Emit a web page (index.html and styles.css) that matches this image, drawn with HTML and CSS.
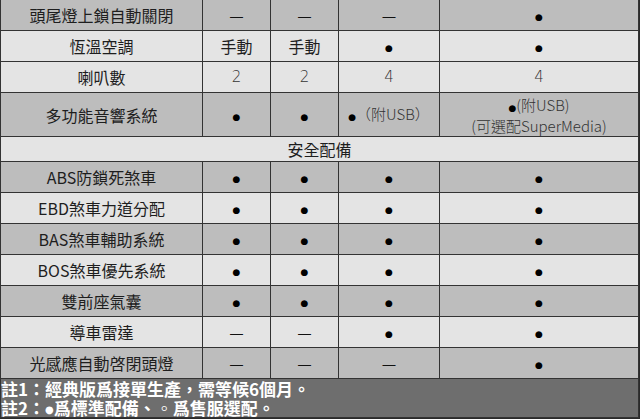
FILE: index.html
```html
<!DOCTYPE html>
<html lang="zh-Hant">
<head>
<meta charset="utf-8">
<link rel="stylesheet" href="styles.css">
</head>
<body>
<table class="spec">
<colgroup>
<col class="c1"><col class="c2"><col class="c3"><col class="c4"><col class="c5">
</colgroup>
<tbody>
<tr class="dark r"><td>頭尾燈上鎖自動關閉</td><td><span class="dash">—</span></td><td><span class="dash">—</span></td><td><span class="dash">—</span></td><td><span class="dot">●</span></td></tr>
<tr class="light r"><td>恆溫空調</td><td>手動</td><td>手動</td><td><span class="dot">●</span></td><td><span class="dot">●</span></td></tr>
<tr class="light r"><td>喇叭數</td><td class="num">2</td><td class="num">2</td><td class="num">4</td><td class="num">4</td></tr>
<tr class="dark tall"><td>多功能音響系統</td><td><span class="dot">●</span></td><td><span class="dot">●</span></td><td><span class="dot">●</span><span class="lat">（附USB）</span></td><td class="two"><span class="dot">●</span><span class="lat">(附USB)</span><br><span class="lat">(可選配SuperMedia)</span></td></tr>
<tr class="light sec"><td colspan="5">安全配備</td></tr>
<tr class="dark r"><td>ABS防鎖死煞車</td><td><span class="dot">●</span></td><td><span class="dot">●</span></td><td><span class="dot">●</span></td><td><span class="dot">●</span></td></tr>
<tr class="light r"><td>EBD煞車力道分配</td><td><span class="dot">●</span></td><td><span class="dot">●</span></td><td><span class="dot">●</span></td><td><span class="dot">●</span></td></tr>
<tr class="dark r"><td>BAS煞車輔助系統</td><td><span class="dot">●</span></td><td><span class="dot">●</span></td><td><span class="dot">●</span></td><td><span class="dot">●</span></td></tr>
<tr class="light r"><td>BOS煞車優先系統</td><td><span class="dot">●</span></td><td><span class="dot">●</span></td><td><span class="dot">●</span></td><td><span class="dot">●</span></td></tr>
<tr class="dark r"><td>雙前座氣囊</td><td><span class="dot">●</span></td><td><span class="dot">●</span></td><td><span class="dot">●</span></td><td><span class="dot">●</span></td></tr>
<tr class="light r"><td>導車雷達</td><td><span class="dash">—</span></td><td><span class="dash">—</span></td><td><span class="dot">●</span></td><td><span class="dot">●</span></td></tr>
<tr class="dark r"><td>光感應自動啓閉頭燈</td><td><span class="dash">—</span></td><td><span class="dash">—</span></td><td><span class="dash">—</span></td><td><span class="dot">●</span></td></tr>
<tr class="foot"><td colspan="5"><div class="fl">註1：經典版爲接單生產，需等候6個月。</div><div class="fl">註2：<span class="fdot">●</span>爲標準配備、◦爲售服選配。</div></td></tr>
</tbody>
</table>
</body>
</html>
```

FILE: styles.css
```css
html, body {
  margin: 0;
  padding: 0;
  background: #2a2a2a;
}
body {
  width: 640px;
  height: 419px;
  overflow: hidden;
}
.spec {
  width: 638px;
  border-collapse: collapse;
  table-layout: fixed;
  font-family: "Noto Sans CJK TC", "Liberation Sans", sans-serif;
  font-size: 16px;
  color: #1e1e1e;
}
.c1 { width: 202px; }
.c2 { width: 68px; }
.c3 { width: 68px; }
.c4 { width: 101px; }
.c5 { width: 199px; }
.spec td {
  border: 1px solid #333;
  text-align: center;
  padding: 0;
  line-height: 18px;
}
.spec tr:first-child td { border-top: none; }
.r td { height: 30px; }
.tall td { height: 43px; }
.sec td { height: 24px; }
.dark td { background: #bdbdbd; }
.light td { background: #e4e4e4; }
.num {
  font-family: "DejaVu Sans", "Liberation Sans", sans-serif;
  font-size: 15px;
  font-weight: 300;
  color: #333;
}
.lat {
  font-family: "Noto Sans CJK TC", sans-serif;
  font-size: 15px;
  font-weight: 300;
  color: #333;
}
.two { line-height: 17px !important; }
.dot {
  font-family: "DejaVu Sans", sans-serif;
  font-size: 9px;
  color: #000;
}
.dash {
  font-family: "Liberation Sans", sans-serif;
  font-size: 13px;
  color: #111;
}
.foot td {
  background: #6e6e6e;
  color: #fff;
  text-align: left;
  height: 38px;
  vertical-align: top;
}
.fl {
  font-size: 17px;
  font-weight: 700;
  line-height: 19px;
  height: 19px;
  white-space: nowrap;
}
.fdot {
  font-family: "DejaVu Sans", sans-serif;
  font-size: 10px;
  vertical-align: 2px;
}
```
